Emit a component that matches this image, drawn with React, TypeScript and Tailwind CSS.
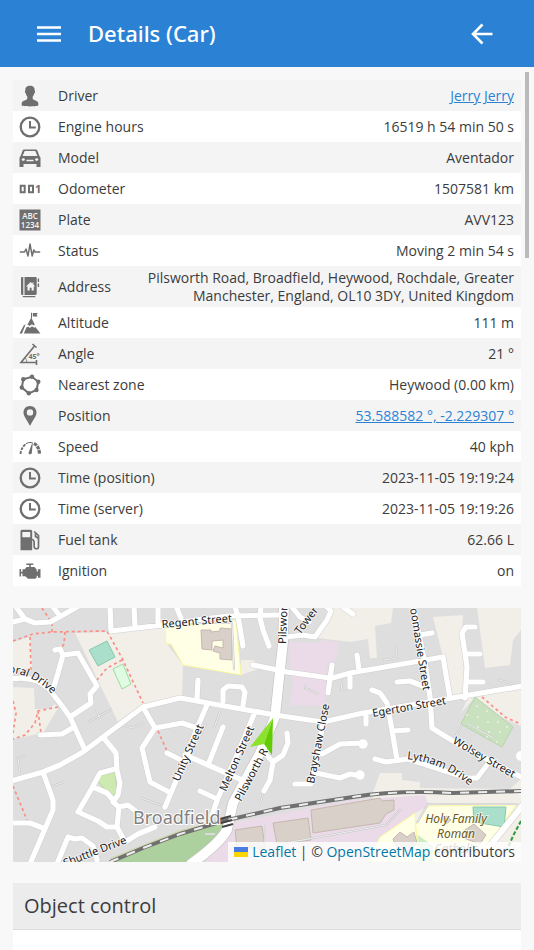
import { useState } from "react";
import type { ReactNode } from "react";

type IconProps = { children: ReactNode };

function Icon({ children }: IconProps) {
  return (
    <svg
      viewBox="0 0 22 22"
      className="block h-[22px] w-[22px] fill-[#6f6f6f] stroke-none"
      aria-hidden="true"
    >
      {children}
    </svg>
  );
}

const Driver = () => (
  <Icon>
    <path d="M11 .7c3.2 0 4.9 1.5 4.7 5 .6.3.5 2-.4 2.600-.3 1.500-.9 2.500-1.600 3.200v2.300c.5 1.600 5.300 1.700 5.600 4.300v2.200c0 .8-3.500 1.100-8.300 1.100s-8.300-.3-8.300-1.100v-2.200c.3-2.600 5.100-2.700 5.600-4.300v-2.300c-.7-.7-1.300-1.700-1.600-3.200-.9-.6-1-2.300-.4-2.600C6.100 2.200 7.800.7 11 .7Z" />
  </Icon>
);

const Clock = () => (
  <Icon>
    <circle cx="11" cy="11" r="9.300" fill="none" stroke="#6f6f6f" strokeWidth="2.300" />
    <path d="M11 5v6.400h5.800" fill="none" stroke="#6f6f6f" strokeWidth="2" />
  </Icon>
);

const CarFront = () => (
  <Icon>
    <path
      fillRule="evenodd"
      d="M5.300 2.500h11.400c.9 0 1.400.4 1.700 1.100l2 5.300c.7.5 1.100 1.200 1.100 2v9h-4v-2.800H4.500v2.800H.500v-9c0-.8.4-1.500 1.100-2l2-5.300c.3-.7.8-1.100 1.700-1.100Zm.4 1.400L3.600 8.900h14.800l-2.100-5ZM4.300 11.200c-1 0-1.600.6-1.600 1.300s.6 1.300 1.600 1.300 1.600-.6 1.600-1.300-.6-1.300-1.600-1.300Zm13.400 0c-1 0-1.600.6-1.600 1.300s.6 1.300 1.600 1.300 1.600-.6 1.600-1.300-.6-1.300-1.600-1.300ZM7.500 12.700v1.500h7v-1.500Z"
    />
  </Icon>
);

const Odometer = () => (
  <Icon>
    <path d="M1.700 7.700h4v6.600h-4ZM10 7.700h4v6.600h-4Z" fill="none" stroke="#6f6f6f" strokeWidth="2" />
    <text x="16" y="15.300" fontSize="11" fontWeight="700" fontFamily="Open Sans, sans-serif">
      1
    </text>
  </Icon>
);

const Plate = () => (
  <Icon>
    <rect x=".5" y=".5" width="21" height="21" />
    <g fill="#f4f4f4" textAnchor="middle" fontSize="8" fontWeight="600" fontFamily="Open Sans, sans-serif">
      <text x="11" y="9.500">ABC</text>
      <text x="11" y="18.500">1234</text>
    </g>
  </Icon>
);

const Pulse = () => (
  <Icon>
    <path
      d="M.8 12h4.700l1.500-3 2 7 2-12 2.200 12 1.600-6 1.200 2h5.200"
      fill="none"
      stroke="#6f6f6f"
      strokeWidth="1.500"
      strokeLinejoin="round"
    />
  </Icon>
);

const AddressBook = () => (
  <Icon>
    <path
      fillRule="evenodd"
      d="M5.500 1h11c.7 0 1.200.5 1.200 1.200v15.600c0 .7-.5 1.200-1.200 1.200h-11ZM11.600 6 7 10.500h1.500v4h2.200v-2.800h1.900v2.800h2.200v-4h1.500l-1.800-1.800V6.500h-1v1.200Z"
    />
    <path d="M2 2c0-.7.5-1 1-1h1.300v18H3.200c-.8 0-1.200-.5-1.200-1.200ZM3.500 20h12.800v1.300H5c-.8 0-1.300-.5-1.500-1.300ZM18.700 2.500h1.400V6h-1.400ZM18.700 7.500h1.400V11h-1.400Z" />
  </Icon>
);

const Mountain = () => (
  <Icon>
    <path d="m.5 21.500 4.200-8 2-1.200L3 21.500ZM4.800 21.500l2.700-6.200 2-.6 1.400 1.300 2.100-1.700 2.200 1.500 1.200-.8 5 6.500ZM8.300 13l4-7.500 3.500 7.200-1 .9-1.900-1.300-2.200 1.800-1.300-1.200ZM12 .8h1v5.500h-1ZM13.800 1h5l-1.200 1.700 1.200 1.800h-5Z" />
  </Icon>
);

const Angle = () => (
  <Icon>
    <path
      d="M17.500 19.500H2L15.500 3M13.500 1l4 3.500M17.500 17v5"
      fill="none"
      stroke="#6f6f6f"
      strokeWidth="1.600"
    />
    <path d="M6.300 15q1.800 1.800 1.500 4.500" fill="none" stroke="#6f6f6f" strokeWidth=".8" />
    <text x="9.500" y="15.500" fontSize="7" fontWeight="700" fontFamily="Open Sans, sans-serif">
      45°
    </text>
  </Icon>
);

const zonePoints = [
  [4.300, 5.200], [13, 2.800], [19.300, 7.800], [17.500, 16], [9.800, 19.300], [2.800, 13.500],
];

const Zone = () => (
  <Icon>
    <path d="m4.300 5.200 8.700-2.400 6.300 5-1.800 8.200-7.700 3.300-7-5.800Z" fill="none" stroke="#6f6f6f" strokeWidth="2" />
    {zonePoints.map(([x, y]) => (
      <circle key={x} cx={x} cy={y} r="2.200" />
    ))}
  </Icon>
);

const Pin = () => (
  <Icon>
    <path
      fillRule="evenodd"
      d="M11 1c3.800 0 6.500 2.800 6.500 6.400 0 4-3.800 7.400-6.500 13.600C8.300 14.800 4.500 11.400 4.500 7.400 4.500 3.800 7.200 1 11 1Zm0 3.200a3.200 3.200 0 1 0 0 6.400 3.200 3.200 0 0 0 0-6.400Z"
    />
  </Icon>
);

const Gauge = () => (
  <Icon>
    <g fill="none" stroke="#6f6f6f">
      <path d="M1.500 18q.5-6 5-9.700" strokeWidth="1.800" strokeDasharray="3 1" />
      <path d="M7 7.700q3-2 6.200-1" strokeWidth="1" />
      <path d="M15 7.300q5 3 5.500 10.500" strokeWidth="3.200" strokeDasharray="3.500 .8" />
    </g>
    <path d="m14 5-1.200 12c-.4 1.900-3.600 1.700-3.200-.6Z" />
  </Icon>
);

const Fuel = () => (
  <Icon>
    <path
      fillRule="evenodd"
      d="M3 .8h8.500c1 0 1.700.7 1.700 1.700v18.700H1.500V2.500C1.500 1.500 2 .8 3 .8Zm.3 2.200v5.200h7.900V3Z"
    />
    <path
      d="M13 10.500c2.800 0 2 4 2.200 7.200.2 2.700 4.300 2.700 4.300 0V6.500l-4.300-4M16.500 4.500v3l2.800 1.700"
      fill="none"
      stroke="#6f6f6f"
      strokeWidth="1.700"
    />
  </Icon>
);

const Engine = () => (
  <Icon>
    <path d="M7.300 3.500h7v1.400h-2.500v2h3.700l2.200 2.600v2h1.200V9.300h2.600v8.500h-2.600v-2h-1.200v1.700l-1.400 1.300H9l-2.700-2.600H3.500v-2.700H2v3H.5V9h1.500v2.700h1.500V9.200h2.200l2-2.300h2.500v-2H7.300Z" />
  </Icon>
);

type Row = { icon: ReactNode; label: string; value: string; href?: string };

const rows: Row[] = [
  { icon: <Driver />, label: "Driver", value: "Jerry Jerry", href: "#driver" },
  { icon: <Clock />, label: "Engine hours", value: "16519 h 54 min 50 s" },
  { icon: <CarFront />, label: "Model", value: "Aventador" },
  { icon: <Odometer />, label: "Odometer", value: "1507581 km" },
  { icon: <Plate />, label: "Plate", value: "AVV123" },
  { icon: <Pulse />, label: "Status", value: "Moving 2 min 54 s" },
  {
    icon: <AddressBook />,
    label: "Address",
    value:
      "Pilsworth Road, Broadfield, Heywood, Rochdale, Greater Manchester, England, OL10 3DY, United Kingdom",
  },
  { icon: <Mountain />, label: "Altitude", value: "111 m" },
  { icon: <Angle />, label: "Angle", value: "21 °" },
  { icon: <Zone />, label: "Nearest zone", value: "Heywood (0.00 km)" },
  { icon: <Pin />, label: "Position", value: "53.588582 °, -2.229307 °", href: "#position" },
  { icon: <Gauge />, label: "Speed", value: "40 kph" },
  { icon: <Clock />, label: "Time (position)", value: "2023-11-05 19:19:24" },
  { icon: <Clock />, label: "Time (server)", value: "2023-11-05 19:19:26" },
  { icon: <Fuel />, label: "Fuel tank", value: "62.66 L" },
  { icon: <Engine />, label: "Ignition", value: "on" },
];

const streets = [
  "M0 14 12 11 22 15 37 14 50 7 69-4",
  "M40-1 47 8M3-1 12 11",
  "M97-2 98 23 150 17 190 11 217 8 267 7",
  "M121-1 122 19M145-1V17M163-2 168 10",
  "M222-1 225 8 230 38M248-1 247 10 250 22 256 38",
  "M42 42 47 41 50 47 65 45 84 78 77 86 78 95 57 109",
  "M50 47 45 65 39 85",
  "M-2 71Q22 67 36 81L50 99 57 109 72 142",
  "M27 127 49 126 61 119",
  "M-2 173 30 164 47 157 70 144 90 129 130 99 167 90 262 107 310 114 350 105 427 92 510 78",
  "M130 99 142 120 169 115 184 120",
  "M194 97 184 120 177 139 160 180 152 199",
  "M142 120 129 140 137 174 156 184M154 145 170 153",
  "M30 164 40 192V202L17 256M-2 215H17L30 220",
  "M44 256 55 229 62 231 69 230 80 238 84 252",
  "M90 129 103 145 104 162 107 175 105 187 100 194 106 199 104 219 112 234 125 226 142 219",
  "M102 161 87 165 79 180 65 204 85 213 94 219H104",
  "M80 179 94 185 100 192M106 199 115 197 124 204",
  "M240 57 274 64 317 70M319 57 315 85",
  "M316 71 337 65 430 49 437 90",
  "M344 47 346 62M337 79V66",
  "M274 29 290 27 302 29 314 12 318 3 312-3",
  "M279-1 287 9 296 14M330-1 340 6",
  "M210 93V82L215 78 229 79 232 84 230 97M185 72 184 91",
  "M242 104 227 140 205 190 199 207M187 183 204 191",
  "M172 147 195 157 229 172M210 119 195 157",
  "M274 125 275 135 270 147 260 154 257 172 251 183M247 140 260 154",
  "M310 114 306 140 298 176H282",
  "M309 146 327 136 350 135M303 165 327 170 337 166 348 168",
  "M400-2 412 55 417 89 419 120 440 133 510 170",
  "M407 27 419 25M384 74 397 73 412 79",
  "M359 82 367 85 374 95 379 122 384 152M362 151 373 154 395 151M379 123 395 122M353 107V116",
  "M462 19H453L449 25 454 59 452 90M453 46H467M453 74H470",
  "M395 151 454 170 464 170 474 157",
];

const lanes =
  "M7 165 5 150 13 147M37 179 51 174M75 114 99 101M83 101 87 111M107 116 119 120 131 115M128 190 150 198M184 15 219 15 221 62M207 103 201 121M187 129 193 115M292 76V80L306 86M371 57V52L384 50 383 38M485 70 486 72 500 76M330 66 328 82 335 82M251 183 247 196M449 117 438 136M454 115 480 130M252 217 252 235M262 237 373 217 388 201M192 226H202M404 215 415 196 505 196";

const footways =
  "M0 33 20 26 39 24 94 23 109 50 130 95M29 0 39 15V24M17 29 18 62M52 24 51 36 46 43M109 52 94 60 84 72M45 99 25 103 22 115 12 127 0 131M25 103 28 125M0 93 3 105 0 125M0 178 14 212M145 123 154 143M469 89 484 102 492 109 510 117";

const mainRoad =
  "M271-2 270 35 267 62 262 109 247 145 220 195 214 222Q206 236 178 256";

const railway =
  "M97 254 130 240 167 226 210 213 267 200 340 189Q384 182 440 185L510 183";

const parkDots = [
  [464, 98], [474, 103], [454, 107], [465, 109], [475, 114], [485, 114], [465, 119],
  [476, 124], [487, 124], [474, 129], [484, 134], [494, 119],
];

function StreetMap() {
  return (
    <svg
      viewBox="0 0 508 254"
      preserveAspectRatio="xMidYMid slice"
      className="block aspect-[2/1] w-full bg-[#dedede]"
      role="img"
      aria-label="Map of Broadfield"
    >
      <g fill="#f2efe9">
        <path d="M62 25 97 24 152 20 154 36 170 57 169 89 130 98 105 114Z" />
        <path d="M0 34 17 29 19 60 0 62ZM0 79 21 80 22 101 37 101 42 96 45 100 30 125 0 131Z" />
        <path d="M317 0H380L378 15 362 18 364 50 357 50 355 31 337 34 305 30ZM420 9 450 7 449 25 452 87 438 88 430 49ZM464 0H508V22L500 32 497 57 472 60Z" />
        <path d="M455 90 508 80V118L490 110 462 89 448 105ZM367 165H389V172L407 174V180L497 181 508 171V254H360V184Z" />
        <path d="M228 52 240 52 248 60 228 67Z" />
      </g>

      <path d="M97 254 167 226 213 213 205 230 180 254Z" fill="#add19e" />
      <path d="M97 250 167 222 212 211V214L167 228 99 254Z" fill="#cfd8ae" />
      <path
        d="M217 222 218 215 340 192 412 187 416 198 402 205 370 228 355 254H193Z M275 34 304 35 307 32 326 34 321 58 314 57 312 98 277 97 280 80Z"
        fill="#ebdbe8"
      />
      <g fill="#ffffe5" stroke="#f8f7a0" strokeWidth="1">
        <path d="M152 20 223 12 228 67 170 57 158 36 153 36Z" />
        <path d="M415 198 503 197 463 254H410L402 218ZM367 229 402 205 405 254H355Z" />
      </g>
      <path d="M405 227 420 238V254H407Z" fill="#c9ecc0" />
      <path d="M84 172 89 166 102 164 104 184 99 188 94 184Z" fill="#cdebb0" stroke="#b5d99a" />
      <path d="M462 89 500 119 489 139 448 116Z" fill="#c9e1bf" stroke="#b8d4ac" />
      {parkDots.map(([x, y]) => (
        <circle key={`${x}-${y}`} cx={x} cy={y} r="1" fill="#e7f3e0" />
      ))}
      <path d="M76 42 94 33 102 49 85 58ZM460 199H493L491 219 461 214Z" fill="#aae0cb" stroke="#86c9ae" />
      <path d="M100 61 110 56 118 76 109 81Z" fill="#dffce2" stroke="#9bdca0" />

      <g fill="#d9d0c9" stroke="#c5b8ae" strokeWidth="1">
        <path d="M188 22 198 22V24L207 23V20L219 21V52L207 51V45L200 43 202 38 210 40V32L199 33V42L189 41Z" />
        <path d="M222 222 249 218 252 240 224 240ZM260 215 295 210 298 232 264 236ZM298 202 367 190 369 193 381 192V202L373 206 367 215 300 225Z" />
        <path d="M452 222 461 216 473 227 467 236 453 231ZM380 231 387 224 394 229 401 224 404 235 396 243 384 240ZM429 211 434 208 438 212 433 216Z" />
      </g>

      <path d={lanes} fill="none" stroke="#c6c6c6" strokeWidth="2" />
      <path d={lanes} fill="none" stroke="#efefef" strokeWidth="1" />
      <path d={footways} fill="none" stroke="#f98f84" strokeWidth="1.700" strokeDasharray="3 3" />
      <path d="M508 213 500 228 494 242" fill="none" stroke="#2c9a3a" strokeWidth="2" strokeDasharray="4 2" />

      <g fill="none" strokeLinecap="round" strokeLinejoin="round">
        <path d={streets.join("")} stroke="#cfcfcf" strokeWidth="6.200" />
        <path d={mainRoad} stroke="#c3c3c3" strokeWidth="11" />
        <path d="M510 197 480 234 464 254" stroke="#c8c8c8" strokeWidth="7" />
        <path d={streets.join("")} stroke="#fff" strokeWidth="5.200" />
        <path d={mainRoad} stroke="#fff" strokeWidth="9.700" />
        <path d="M510 197 480 234 464 254" stroke="#fff" strokeWidth="6" />
      </g>
      <g fill="#fff">
        <circle cx="350" cy="136" r="4.700" />
        <circle cx="347" cy="167" r="4.700" />
        <circle cx="508" cy="148" r="5" />
      </g>

      <path d={railway} fill="none" stroke="#707070" strokeWidth="4" />
      <path d={railway} fill="none" stroke="#eee" strokeWidth="2" strokeDasharray="9 9" />
      <path d="M207 211 218 208M208 215 219 212M209 219 220 216" fill="none" stroke="#444" strokeWidth="2" />

      <defs>
        <path id="balmoral" d="M-31 67Q18 55 48 97" />
        <path id="lytham" d="M394 151Q432 155 460 181" />
      </defs>
      <g
        fill="#222222"
        stroke="#ffffff"
        strokeOpacity=".65"
        strokeWidth="2"
        strokeLinejoin="round"
        fontSize="11"
        fontFamily="Noto Sans, sans-serif"
        className="[paint-order:stroke]"
      >
        <text transform="translate(149 20) rotate(-5)">Regent Street</text>
        <text transform="translate(273 36) rotate(-88)">Pilsworth Road</text>
        <text transform="translate(287 27) rotate(-53)">Tower</text>
        <text transform="translate(396 -6) rotate(81)">Coomassie Street</text>
        <text transform="translate(360 109) rotate(-10)">Egerton Street</text>
        <text transform="translate(439 135) rotate(30)">Wolsey Street</text>
        <text transform="translate(301 176) rotate(-79)">Brayshaw Close</text>
        <text transform="translate(166 174) rotate(-66)">Unity Street</text>
        <text transform="translate(213 184) rotate(-66)">Melton Street</text>
        <text transform="translate(228 194) rotate(-62)">Pilsworth R</text>
        <text transform="translate(52 259) rotate(-21)">Shuttle Drive</text>
        <text>
          <textPath href="#balmoral">Balmoral Drive</textPath>
        </text>
        <text>
          <textPath href="#lytham">Lytham Drive</textPath>
        </text>
      </g>
      <text
        x="120"
        y="216"
        fill="#828282"
        stroke="#ffffff"
        strokeWidth="2"
        fontSize="18"
        fontFamily="Noto Sans, sans-serif"
        className="[paint-order:stroke]"
      >
        Broadfield
      </text>
      <g
        fill="#6a5a1c"
        stroke="#ffffff"
        strokeOpacity=".6"
        strokeWidth="2"
        fontSize="12"
        fontStyle="italic"
        textAnchor="middle"
        fontFamily="Noto Sans, sans-serif"
        className="[paint-order:stroke]"
      >
        <text x="443" y="215">Holy Family</text>
        <text x="443" y="230">Roman</text>
        <text x="443" y="245">Catholic</text>
      </g>

      <path d="M260 110 237 139 251 136Z" fill="#8be32f" />
      <path d="M260 110 251 136 259 147Z" fill="#63cc00" />
    </svg>
  );
}

function App() {
  const [menuOpen, setMenuOpen] = useState(false);

  return (
    <div className="relative flex min-h-screen flex-col bg-[#f8f8f8] font-['Open_Sans',sans-serif] text-[14px] leading-[18px] text-[#3c3c3c]">
      <header className="flex h-[67px] items-center bg-[#2b82d4] pr-10 pl-9 text-white">
        <button
          type="button"
          aria-label="Menu"
          aria-expanded={menuOpen}
          onClick={() => setMenuOpen(!menuOpen)}
        >
          <svg viewBox="0 0 26 18" className="h-[18px] w-[26px]" stroke="currentColor" strokeWidth="2.400">
            <path d="M1 2.500h24M1 9h24M1 15.500h24" />
          </svg>
        </button>
        <h1 className="ml-[26px] flex-1 pb-0.5 font-['Noto_Sans',sans-serif] text-[22px] leading-8 font-medium">
          Details (Car)
        </h1>
        <button type="button" aria-label="Back">
          <svg
            viewBox="0 0 24 24"
            className="h-6 w-6"
            fill="none"
            stroke="currentColor"
            strokeWidth="2.600"
          >
            <path d="M22.500 12H3M12.500 2.500 3 12l9.500 9.500" />
          </svg>
        </button>
      </header>

      <div className="absolute top-[72px] right-[5px] h-[186px] w-1 bg-[#bababa]" />

      <main className="flex flex-1 flex-col px-[13px] pt-[13px]">
        <table className="block w-full">
          <tbody className="block">
            {rows.map((row) => (
              <tr
                key={row.label}
                className="flex min-h-[31px] items-center odd:bg-[#f4f4f4] even:bg-white"
              >
                <td className="w-[45px] shrink-0 pl-1.5">{row.icon}</td>
                <th scope="row" className="pt-[3px] pb-[2px] text-left font-normal whitespace-nowrap">
                  {row.label}
                </th>
                <td className="flex-1 pt-[3px] pr-[7px] pb-[2px] pl-4 text-right">
                  {row.href ? (
                    <a href={row.href} className="text-[#2b82d4] underline">
                      {row.value}
                    </a>
                  ) : (
                    row.value
                  )}
                </td>
              </tr>
            ))}
          </tbody>
        </table>

        <div className="relative mt-[22px] overflow-hidden">
          <StreetMap />
          <div className="absolute right-0 bottom-0 flex h-5 items-center bg-white/80 px-1.5 whitespace-pre">
            <svg viewBox="0 0 14 10" className="mr-1 h-[10px] w-[14px]" aria-hidden="true">
              <path fill="#4c7be1" d="M0 0h14v5H0z" />
              <path fill="#ffd500" d="M0 5h14v5H0z" />
            </svg>
            <a href="#leaflet" className="text-[#0078a8]">
              Leaflet
            </a>
            {" | © "}
            <a href="#openstreetmap" className="text-[#0078a8]">
              OpenStreetMap
            </a>
            {" contributors"}
          </div>
        </div>

        <section className="mt-[21px] flex flex-1 flex-col bg-white">
          <h2 className="border-b border-[#dddddd] bg-[#ececec] px-[11px] py-[9px] text-[20px] leading-7">
            Object control
          </h2>
        </section>
      </main>
    </div>
  );
}

export default App;
